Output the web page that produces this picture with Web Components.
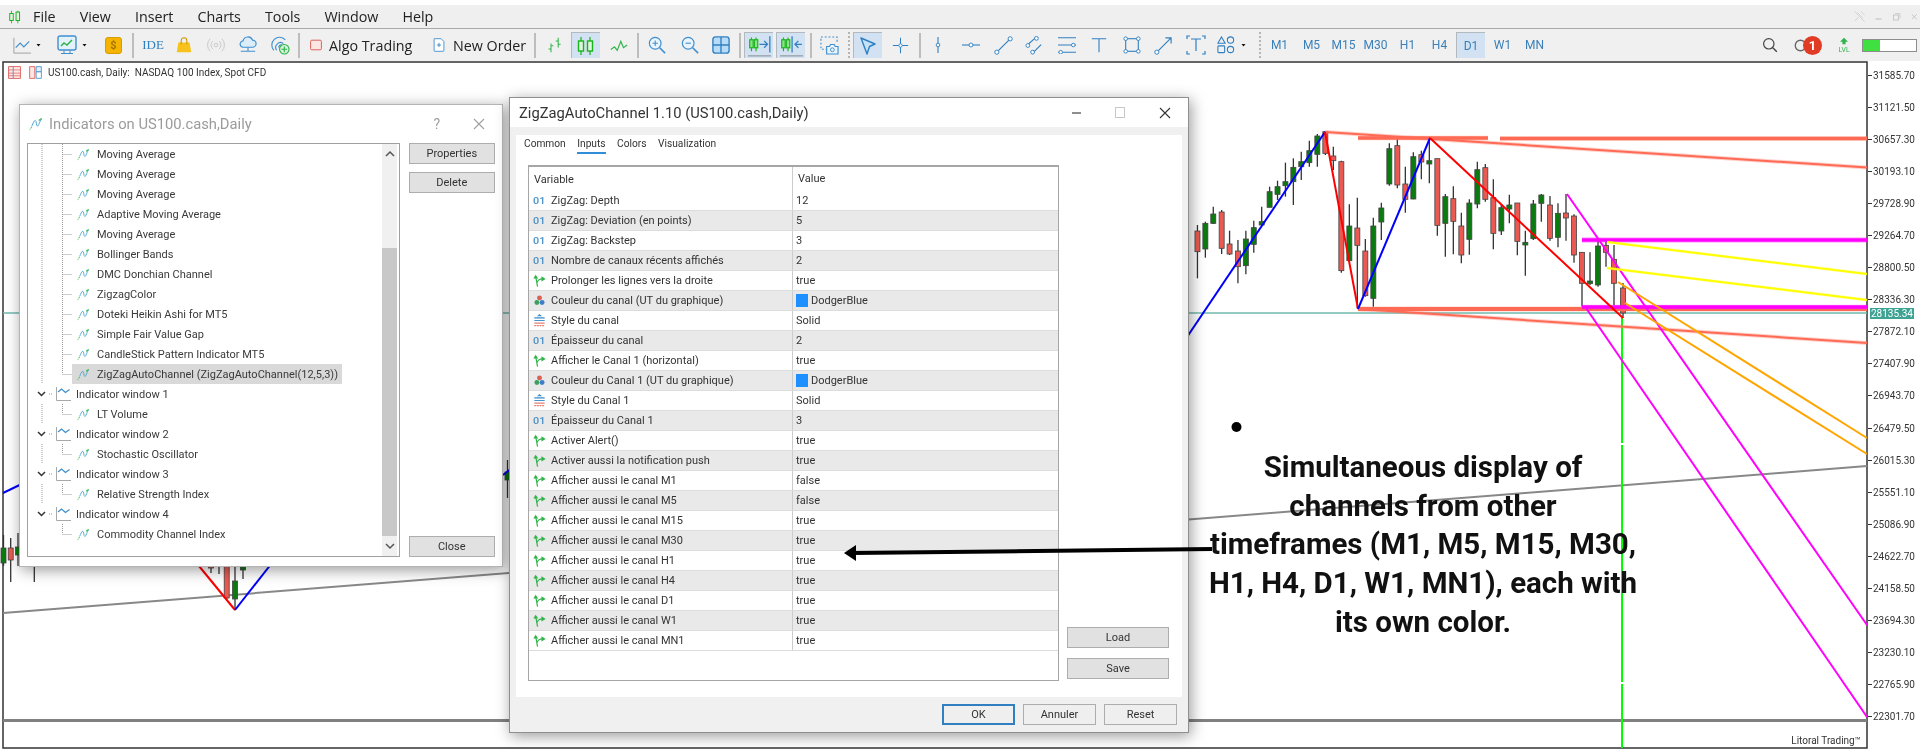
<!DOCTYPE html>
<html>
<head>
<meta charset="utf-8">
<title>ZigZagAutoChannel</title>
<style>
  html, body { margin: 0; background: #fff; font-family: Roboto, "Liberation Sans", sans-serif; }
</style>
</head>
<body>
<mt-app>
  <mt-menubar>
    <mt-menu-item>File</mt-menu-item>
    <mt-menu-item>View</mt-menu-item>
    <mt-menu-item>Insert</mt-menu-item>
    <mt-menu-item>Charts</mt-menu-item>
    <mt-menu-item>Tools</mt-menu-item>
    <mt-menu-item>Window</mt-menu-item>
    <mt-menu-item>Help</mt-menu-item>
  </mt-menubar>
  <mt-toolbar></mt-toolbar>
  <mt-chart></mt-chart>

  <mt-dialog heading="Indicators on US100.cash,Daily" inactive controls="help" style="left:19px;top:104px;width:484px;height:463px">
    <mt-indicators></mt-indicators>
  </mt-dialog>

  <mt-dialog heading="ZigZagAutoChannel 1.10 (US100.cash,Daily)" controls="full" style="left:509px;top:97px;width:680px;height:636px">
    <mt-inputs>
      <mt-input-row icon="num" value="12">ZigZag: Depth</mt-input-row>
      <mt-input-row icon="num" value="5">ZigZag: Deviation (en points)</mt-input-row>
      <mt-input-row icon="num" value="3">ZigZag: Backstep</mt-input-row>
      <mt-input-row icon="num" value="2">Nombre de canaux récents affichés</mt-input-row>
      <mt-input-row icon="bool" value="true">Prolonger les lignes vers la droite</mt-input-row>
      <mt-input-row icon="color" value="DodgerBlue" swatch>Couleur du canal (UT du graphique)</mt-input-row>
      <mt-input-row icon="style" value="Solid">Style du canal</mt-input-row>
      <mt-input-row icon="num" value="2">Épaisseur du canal</mt-input-row>
      <mt-input-row icon="bool" value="true">Afficher le Canal 1 (horizontal)</mt-input-row>
      <mt-input-row icon="color" value="DodgerBlue" swatch>Couleur du Canal 1 (UT du graphique)</mt-input-row>
      <mt-input-row icon="style" value="Solid">Style du Canal 1</mt-input-row>
      <mt-input-row icon="num" value="3">Épaisseur du Canal 1</mt-input-row>
      <mt-input-row icon="bool" value="true">Activer Alert()</mt-input-row>
      <mt-input-row icon="bool" value="true">Activer aussi la notification push</mt-input-row>
      <mt-input-row icon="bool" value="false">Afficher aussi le canal M1</mt-input-row>
      <mt-input-row icon="bool" value="false">Afficher aussi le canal M5</mt-input-row>
      <mt-input-row icon="bool" value="true">Afficher aussi le canal M15</mt-input-row>
      <mt-input-row icon="bool" value="true">Afficher aussi le canal M30</mt-input-row>
      <mt-input-row icon="bool" value="true">Afficher aussi le canal H1</mt-input-row>
      <mt-input-row icon="bool" value="true">Afficher aussi le canal H4</mt-input-row>
      <mt-input-row icon="bool" value="true">Afficher aussi le canal D1</mt-input-row>
      <mt-input-row icon="bool" value="true">Afficher aussi le canal W1</mt-input-row>
      <mt-input-row icon="bool" value="true">Afficher aussi le canal MN1</mt-input-row>
    </mt-inputs>
  </mt-dialog>

  <mt-note>
    <div>Simultaneous display of</div>
    <div>channels from other</div>
    <div>timeframes (M1, M5, M15, M30,</div>
    <div>H1, H4, D1, W1, MN1), each with</div>
    <div>its own color.</div>
  </mt-note>
</mt-app>

<script>
const BLUE = "#3f8fcf";
const GREEN = "#2fb34a";

// toolbar and row icons, all on a 20x20 box unless a width is passed
const ICONS = {
  logo: `<path d="M5 1v18M14 1v18" stroke="#18b418" stroke-width="1.2"/><rect x="2.5" y="5" width="5" height="10" fill="#e6f7e6" stroke="#18b418" stroke-width="1.4"/><rect x="11.5" y="3" width="5" height="12" fill="#e6f7e6" stroke="#18b418" stroke-width="1.4"/>`,
  linechart: `<path d="M1 2V19H20" stroke="#9a9a9a"/><path d="M3 13l5-5 4 4 6-6" stroke="${BLUE}" stroke-width="1.3"/>`,
  drop: `<path d="M1 8h8l-4 5z" fill="#111"/>`,
  monitor: `<rect x="1" y="1" width="18" height="14" rx="2" fill="#e3f1fb" stroke="${BLUE}" stroke-width="1.4"/><path d="M4 18.5h12M7 15.5v3m6-3v3" stroke="${BLUE}"/><path d="M4 11l3-3 3 2 5-5" stroke="${GREEN}" stroke-width="1.5"/>`,
  bag: `<path d="M3 7h14l2 12H1z" fill="#f7c21c"/><path d="M6.5 9V4.5a3.5 3.5 0 017 0V9" stroke="#c99700" stroke-width="1.3"/>`,
  signal: `<circle cx="10" cy="10" r="2" stroke="#c4c4c4"/><path d="M6.5 5.5a6 6 0 000 9M13.5 5.5a6 6 0 010 9M3.5 3a10 10 0 000 14M16.5 3a10 10 0 010 14" stroke="#c4c4c4"/>`,
  cloud: `<path d="M5 12.5a3.5 3.5 0 01-.5-7 5.5 5.5 0 0110.5-1A4 4 0 0115 12.5z" fill="#dcedfa" stroke="${BLUE}" stroke-width="1.3"/><path d="M10 12.5v4M2 17h16" stroke="${BLUE}" stroke-width="1.2"/>`,
  vps: `<path d="M3 15a8 8 0 0112-11M6 15a5 5 0 017-7M9 13a2 2 0 013-3" stroke="${BLUE}" stroke-width="1.2"/><circle cx="14" cy="14" r="5" fill="#d8f3dc" stroke="${GREEN}" stroke-width="1.2"/><path d="M11 14h6M14 11v6" stroke="${GREEN}" stroke-width="1.2"/>`,
  algo: `<rect x="1" y="2" width="18" height="16" rx="2" fill="#fbe6e3" stroke="#d9534f" stroke-width="1.5"/>`,
  doc: `<path d="M3 1h10l4 4v13a1 1 0 01-1 1H4a1 1 0 01-1-1V2z" fill="#fff" stroke="${BLUE}" stroke-width="1.3"/><path d="M7 10h6M10 7v6" stroke="#2f7fc1" stroke-width="1.2"/>`,
  bars: `<path d="M5 8v11M2 15h3M5 11h3M14 1v12M11 5h3M14 9h3" stroke="${GREEN}" stroke-width="1.3"/>`,
  candle: `<path d="M5 1v18M14 1v18" stroke="#18b418" stroke-width="1.2"/><rect x="2.5" y="5" width="5" height="10" fill="#dff5df" stroke="#18b418" stroke-width="1.4"/><rect x="11.5" y="5" width="5" height="10" fill="#dff5df" stroke="#18b418" stroke-width="1.4"/>`,
  line: `<path d="M1 15l4-3 3 4 4-10 3 7 4-3" stroke="${GREEN}" stroke-width="1.3"/>`,
  zin: `<circle cx="8" cy="8" r="6.5" fill="#eaf4fc" stroke="${BLUE}" stroke-width="1.3"/><path d="M13 13l6 6" stroke="${BLUE}" stroke-width="1.8"/><path d="M5 8h6M8 5v6" stroke="${BLUE}" stroke-width="1.2"/>`,
  zout: `<circle cx="8" cy="8" r="6.5" fill="#eaf4fc" stroke="${BLUE}" stroke-width="1.3"/><path d="M13 13l6 6" stroke="${BLUE}" stroke-width="1.8"/><path d="M5 8h6" stroke="${BLUE}" stroke-width="1.2"/>`,
  grid: `<rect x="1" y="1" width="18" height="18" rx="3" fill="#b8dcf8" stroke="#2f7fc1" stroke-width="1.5"/><path d="M10 1v18M1 10h18" stroke="#2f7fc1" stroke-width="1.5"/>`,
  scrollr: `<path d="M3 3v12M7 3v12" stroke="#18b418"/><rect x="1.5" y="5" width="3" height="7" fill="#8ee08e" stroke="#18b418"/><rect x="5.5" y="5" width="3" height="7" fill="#8ee08e" stroke="#18b418"/><path d="M10 9h7M14 6l3 3-3 3M19 2v14" stroke="#2f7fc1" stroke-width="1.1"/><path d="M0 19h20" stroke="#9aa3ab" stroke-width="1.2"/>`,
  scrolll: `<path d="M3 3v12M7 3v12" stroke="#18b418"/><rect x="1.5" y="5" width="3" height="7" fill="#8ee08e" stroke="#18b418"/><rect x="5.5" y="5" width="3" height="7" fill="#8ee08e" stroke="#18b418"/><path d="M10.5 2v14M19 9h-6M16 6l-3 3 3 3" stroke="#2f7fc1" stroke-width="1.1"/><path d="M0 19h20" stroke="#9aa3ab" stroke-width="1.2"/>`,
  camera: `<path d="M8 14H1V1h17v6" stroke="${BLUE}" stroke-dasharray="2 2" stroke-width="1.2"/><path d="M7 11h3l1-2h4l1 2h3v8H7z" fill="#eaf4fc" stroke="${BLUE}" stroke-width="1.2"/><circle cx="13" cy="14.5" r="2" stroke="${BLUE}"/>`,
  cursor: `<path d="M3 2l14 6-5.5 2.5L9 18z" fill="#c5e2f8" stroke="#2f7fc1" stroke-width="1.4" stroke-linejoin="round"/>`,
  cross: `<path d="M10 1v18M1 10h18" stroke="#2f7fc1" stroke-width="1.2"/><circle cx="10" cy="10" r="2" fill="#fff" stroke="#2f7fc1"/>`,
  vline: `<path d="M10 1v18" stroke="#2f7fc1" stroke-width="1.2"/><circle cx="10" cy="10" r="2" fill="#fff" stroke="#2f7fc1"/>`,
  hline: `<path d="M0 10h20" stroke="#2f7fc1" stroke-width="1.2"/><circle cx="10" cy="10" r="2.2" fill="#fff" stroke="#2f7fc1"/>`,
  trend: `<path d="M3 17L17 3" stroke="#2f7fc1" stroke-width="1.2"/><circle cx="3" cy="17" r="2.2" fill="#fff" stroke="#2f7fc1"/><circle cx="17" cy="3" r="2.2" fill="#fff" stroke="#2f7fc1"/>`,
  channel: `<path d="M3 9L11 2M8 18L17 9" stroke="#2f7fc1" stroke-width="1.2"/><circle cx="3" cy="10" r="2" fill="#fff" stroke="#2f7fc1"/><circle cx="12" cy="2.5" r="2" fill="#fff" stroke="#2f7fc1"/><circle cx="8" cy="17" r="2" fill="#fff" stroke="#2f7fc1"/>`,
  fib: `<path d="M0 2h20M0 10h20M0 18h20" stroke="#2f7fc1" stroke-width="1.2"/><circle cx="17" cy="10" r="2" fill="#fff" stroke="#2f7fc1"/><circle cx="3" cy="18" r="2" fill="#fff" stroke="#2f7fc1"/>`,
  ttool: `<path d="M2 3h16M10 3v15" stroke="#2f7fc1" stroke-width="1.2"/>`,
  rect: `<rect x="3" y="3" width="14" height="14" stroke="#2f7fc1" stroke-width="1.2"/><circle cx="3" cy="3" r="2" fill="#fff" stroke="#2f7fc1"/><circle cx="17" cy="3" r="2" fill="#fff" stroke="#2f7fc1"/><circle cx="3" cy="17" r="2" fill="#fff" stroke="#2f7fc1"/><circle cx="17" cy="17" r="2" fill="#fff" stroke="#2f7fc1"/>`,
  arrow: `<path d="M3 17L18 2M12 2h6v6" stroke="#2f7fc1" stroke-width="1.2"/><circle cx="3" cy="17" r="2.2" fill="#fff" stroke="#2f7fc1"/>`,
  textbox: `<path d="M1 4V1h3M16 1h3v3M1 16v3h3M16 19h3v-3M5 4h10M10 4v12" stroke="#2f7fc1" stroke-width="1.2"/>`,
  shapes: `<path d="M5 1l4 7H1z" stroke="#2f7fc1" stroke-width="1.2"/><circle cx="15" cy="4.5" r="3.5" stroke="#2f7fc1" stroke-width="1.2"/><rect x="1" y="11" width="7.5" height="7.5" rx="1" stroke="#2f7fc1" stroke-width="1.2"/><circle cx="15" cy="15" r="3.5" stroke="#2f7fc1" stroke-width="1.2"/>`,
  search: `<circle cx="8.5" cy="8.5" r="6.5" stroke="#444" stroke-width="1.5"/><path d="M13.5 13.5l5 5" stroke="#444" stroke-width="1.8"/>`,
  bell: `<circle cx="10" cy="10" r="7" stroke="#666" stroke-width="1.8"/>`,
  lvl: `<path d="M10 1l5 5h-3v3H8V6H5z" fill="${GREEN}"/><text x="10" y="19" font-size="9" text-anchor="middle" fill="${GREEN}" font-family="Roboto" textLength="14" lengthAdjust="spacingAndGlyphs">LVL</text>`,
  pin: `<path d="M6 3l9 9M8 11l-5 6M12 2l6 6M2 2l16 16" stroke="#c9c9c9" stroke-width="1.1"/>`,
  minus: `<path d="M3 14h12" stroke="#bdbdbd" stroke-width="2"/>`,
  restore: `<rect x="3" y="6" width="10" height="10" stroke="#bdbdbd" stroke-width="1.6"/><path d="M6 3h10v10" stroke="#bdbdbd" stroke-width="1.2"/>`,
  close: `<path d="M4 5l11 11M15 5L4 16" stroke="#bdbdbd" stroke-width="1.8"/>`,
  book: `<rect x="1" y="1" width="18" height="18" fill="#fde8e6" stroke="#d9534f" stroke-width="1.3"/><path d="M1 6h18M1 11h18M1 15h18" stroke="#d9534f"/><path d="M8 1v18" stroke="#3f6fc0"/>`,
  tplt: `<path d="M1 1h8v18H1z" fill="#fde8e6" stroke="#d9534f" stroke-width="1.3"/><path d="M11 1h8v8h-8z" fill="#e3f1fb" stroke="#3f8fcf" stroke-width="1.3"/><path d="M11 9h8v10h-8z" fill="#fff" stroke="#3f8fcf" stroke-width="1.3"/>`,
  ind: `<path d="M1 18c2-1 2-3 3-5" stroke="${GREEN}" stroke-width="1.4" stroke-dasharray="2 1"/><path d="M4 13c2-4 3-8 5-8 2 0 1 8 3 8 2 0 3-7 6-10" stroke="#3f9fd0" stroke-width="1.3"/><path d="M14 5l4-3" stroke="${GREEN}" stroke-width="1.6"/>`,
  num: `<text x="0" y="15" font-size="14" fill="#4a90c8" font-family="Roboto" font-weight="500" textLength="19" lengthAdjust="spacingAndGlyphs">01</text>`,
  bool: `<path d="M7 19.5L4 3" stroke="${GREEN}" stroke-width="1.8"/><path d="M4 1L8 7H0.5z" fill="${GREEN}"/><path d="M6 13C8 9 10 7.5 14 7.5" stroke="${GREEN}" stroke-width="1.6"/><path d="M13 3.5L19.5 7.5L13 11.5z" fill="${GREEN}"/>`,
  color: `<circle cx="10" cy="6" r="3.8" fill="#d9634f"/><circle cx="6" cy="13" r="3.8" fill="#3f9f5f"/><circle cx="14" cy="13" r="3.8" fill="#3f7fc9"/>`,
  style: `<path d="M2 6h16" stroke="#3f8fcf" stroke-width="2"/><path d="M2 10h16" stroke="#3f8fcf" stroke-width="1.5"/><path d="M2 14h16" stroke="#e0584f" stroke-width="1.5"/><path d="M2 18h16" stroke="#e0584f" stroke-width="1.5" stroke-dasharray="3 1"/><path d="M10 0l4 3.5H6z" fill="#3f8fcf"/>`
};

function svgIcon(name, w = 20, h = w) {
  return `<svg width="${w}" height="${h}" viewBox="0 0 20 20" fill="none" style="display:block;flex:none">${ICONS[name]}</svg>`;
}

class MtApp extends HTMLElement {
  constructor() {
    super();
    this.attachShadow({ mode: "open" });
    this.shadowRoot.innerHTML = `
      <style>
        :host { display: flex; flex-direction: column; position: relative; width: 1920px; height: 749px; overflow: hidden; padding-top: 5px; box-sizing: border-box; color: #222; filter: blur(.35px); }
      </style>
      <slot></slot>`;
  }
}

class MtMenubar extends HTMLElement {
  constructor() {
    super();
    this.attachShadow({ mode: "open" });
    this.shadowRoot.innerHTML = `
      <style>
        :host { display: flex; align-items: center; height: 23px; flex: none; background: #efefef; padding-left: 8px; }
        .end { margin-left: auto; display: flex; align-items: center; gap: 8px; padding-right: 1px; }
      </style>
      ${svgIcon("logo", 14, 18)}
      <slot></slot>
      <div class="end">${svgIcon("pin", 13)}${svgIcon("minus", 10)}${svgIcon("restore", 10)}${svgIcon("close", 9)}</div>`;
  }
}

class MtMenuItem extends HTMLElement {
  constructor() {
    super();
    this.attachShadow({ mode: "open" });
    this.shadowRoot.innerHTML = `
      <style>
        :host { display: block; font: 14.3px "Open Sans", Roboto, sans-serif; color: #222; margin-left: 24px; }
        :host(:first-child) { margin-left: 11px; }
      </style>
      <slot></slot>`;
  }
}

class MtTool extends HTMLElement {
  constructor() {
    super();
    this.attachShadow({ mode: "open" });
  }
  connectedCallback() {
    const name = this.getAttribute("icon");
    const w = this.getAttribute("w") || 18;
    const h = this.getAttribute("h") || w;
    this.shadowRoot.innerHTML = `
      <style>
        :host { display: flex; align-items: center; justify-content: center; flex: none; height: 26px; box-sizing: border-box; white-space: nowrap; }
        :host([active]) { background: #d2e2f2; border-top: 1px solid #b3b9bf; border-left: 1px solid #b3b9bf; }
        :host([tf]) { width: 29px; font: 12px Roboto, sans-serif; color: #3a7fb8; }
        :host([label]) { gap: 7px; font: 14.3px "Open Sans", Roboto, sans-serif; color: #222; }
        :host([coin]) { height: 17px; background: #f5b400; border: 1px solid #d99c00; border-radius: 3px; font: 700 11px Roboto, sans-serif; color: #a87400; }
        :host([ide]) { font: 13px "Liberation Serif", serif; color: #2f7fc1; }
      </style>
      ${name ? svgIcon(name, w, h) : ""}<slot></slot>`;
  }
}

class MtToolbar extends HTMLElement {
  constructor() {
    super();
    this.attachShadow({ mode: "open" });
    const items = [
      [13, "linechart", 18], [36, "drop", 10], [57, "monitor", 20], [82, "drop", 10], ["coin", 105, "$", 17], ["sep", 132],
      ["ide", 143, "IDE", 20], [176, "bag", 16], [207, "signal", 18], [239, "cloud", 18], [271, "vps", 19], ["sep", 298],
      [310, "algo", 12, "Algo Trading"], [432, "doc", 14, "New Order"], ["sep", 534],
      [547, "bars", 16], [571, "candle", 20, null, 29], [610, "line", 18], ["sep", 637],
      [648, "zin", 18], [681, "zout", 18], [712, "grid", 18], ["sep", 739],
      [744, "scrollr", 23, null, 29], [776, "scrolll", 23, null, 29], ["sep", 810],
      [820, "camera", 19], ["dots", 848], [853, "cursor", 20, null, 29], [892, "cross", 17], ["sep", 919],
      [929, "vline", 18], [962, "hline", 18], [994, "trend", 19], [1025, "channel", 19], [1058, "fib", 18], [1090, "ttool", 18],
      [1123, "rect", 18], [1154, "arrow", 19], [1186, "textbox", 20], [1217, "shapes", 18], [1241, "drop", 10], ["dots", 1259]
    ];
    // the timeframes sit on a 32px pitch
    ["M1", "M5", "M15", "M30", "H1", "H4", "D1", "W1", "MN"].forEach((t, i) => {
      items.push([1265 + i * 32 + (i > 5 ? -1 : 0), "tf", t]);
    });
    let x = 0;
    let html = "";
    for (const it of items) {
      if (it[0] === "sep" || it[0] === "dots") {
        html += `<i class="${it[0]}" style="margin-left:${it[1] - x}px"></i>`;
        x = it[1] + 2;
      } else if (it[0] === "coin" || it[0] === "ide") {
        html += `<mt-tool ${it[0]} style="margin-left:${it[1] - x}px;width:${it[3]}px">${it[2]}</mt-tool>`;
        x = it[1] + it[3];
      } else if (it[1] === "tf") {
        const active = it[2] === "D1" ? "active" : "";
        html += `<mt-tool tf ${active} style="margin-left:${it[0] - x}px">${it[2]}</mt-tool>`;
        x = it[0] + 29;
      } else if (it[3]) {
        const width = it[3] === "Algo Trading" ? 106 : 98;
        html += `<mt-tool label icon="${it[1]}" w="${it[2]}" style="margin-left:${it[0] - x}px;width:${width}px;justify-content:flex-start">${it[3]}</mt-tool>`;
        x = it[0] + width;
      } else if (it[4]) {
        html += `<mt-tool active icon="${it[1]}" w="${it[2]}" style="margin-left:${it[0] - x}px;width:${it[4]}px"></mt-tool>`;
        x = it[0] + it[4];
      } else {
        html += `<mt-tool icon="${it[1]}" w="${it[2]}" style="margin-left:${it[0] - x}px;width:${it[2]}px"></mt-tool>`;
        x = it[0] + it[2];
      }
    }
    this.shadowRoot.innerHTML = `
      <style>
        :host { display: flex; align-items: center; height: 32px; flex: none; background: #f0f0f0; border-top: 1px solid #a9a9a9; }
        .sep { flex: none; width: 2px; height: 25px; background: #bdbdbd; }
        .dots { flex: none; width: 2px; height: 26px; background: repeating-linear-gradient(#b5b5b5 0 2px, transparent 2px 4px); }
        .end { margin-left: auto; display: flex; align-items: center; }
        .badge { width: 19px; height: 19px; border-radius: 50%; background: #e03b24; color: #fff; font: 700 13px Roboto, sans-serif; display: flex; align-items: center; justify-content: center; margin-left: -5px; }
        .meter { width: 53px; height: 11px; border: 1px solid #8d8d8d; background: linear-gradient(to right, #3fe03f 0 17px, #fff 17px); margin: 0 3px 0 10px; }
      </style>
      ${html}
      <div class="end">
        ${svgIcon("search", 16)}
        <div style="width:15px"></div>
        ${svgIcon("bell", 15)}
        <div class="badge">1</div>
        <div style="width:14px"></div>
        ${svgIcon("lvl", 16, 20)}
        <div class="meter"></div>
      </div>`;
  }
}

// [x, wickTop, bodyTop, bodyBottom, wickBottom, colour], page pixels
const fromZ10 = (a) => a.map(([z, t, b1, b2, e, c]) => [1300 + z / 3, 120 + t / 3, 120 + b1 / 3, 120 + b2 / 3, 120 + e / 3, c]);
const fromZ8 = (a) => a.map(([z, t, b1, b2, e, c]) => [1190 + z / 2.148, 90 + t / 3, 90 + b1 / 3, 90 + b2 / 3, 90 + e / 3, c]);
const CANDLES = [
  [3.5, 535, 548, 563, 566, "g"], [10.7, 538, 548, 560, 582, "r"], [18, 533, 547, 555, 566, "g"], [34.3, 545, 550, 552, 582, "g"],
  [211, 555, 558, 568, 573, "r"], [219, 555, 558, 562, 574, "g"], [226.7, 540, 560, 598, 600, "r"], [235, 540, 581, 599, 610, "g"], [243, 555, 560, 570, 579, "g"],
  [507.5, 460, 472, 480, 498, "g"],
  ...fromZ8([
    [16, 405, 423, 485, 565, "r"], [33, 395, 400, 477, 503, "g"], [50, 350, 372, 400, 402, "g"], [68, 360, 366, 475, 492, "r"],
    [85, 422, 462, 492, 495, "r"], [103, 450, 483, 530, 580, "r"], [120, 422, 447, 527, 553, "g"], [137, 392, 413, 463, 488, "g"],
    [154, 350, 395, 405, 405, "g"], [171, 290, 305, 352, 350, "g"], [188, 272, 290, 313, 330, "g"], [205, 218, 275, 287, 320, "g"],
    [222, 205, 232, 275, 345, "g"], [239, 185, 215, 230, 270, "g"]
  ]),
  ...fromZ10([
    [28, 62, 92, 128, 140, "g"], [52, 42, 48, 103, 140, "g"], [76, 35, 35, 100, 105, "r"], [100, 80, 108, 122, 150, "r"],
    [124, 122, 125, 452, 458, "r"], [148, 253, 318, 422, 425, "g"], [172, 233, 324, 376, 565, "r"], [196, 357, 393, 527, 530, "r"],
    [220, 293, 318, 535, 560, "g"], [244, 248, 264, 306, 360, "g"], [268, 70, 86, 192, 197, "g"], [292, 55, 77, 195, 205, "r"],
    [316, 140, 192, 238, 278, "r"], [340, 97, 110, 237, 238, "g"], [364, 92, 104, 126, 178, "r"], [388, 60, 122, 132, 190, "g"],
    [412, 116, 116, 316, 347, "r"], [436, 222, 230, 310, 410, "g"], [460, 199, 236, 304, 403, "r"], [484, 278, 318, 405, 430, "r"],
    [508, 238, 249, 358, 404, "g"], [532, 125, 149, 252, 265, "g"], [556, 132, 143, 238, 245, "r"], [580, 178, 233, 340, 388, "r"],
    [604, 252, 263, 333, 345, "g"], [628, 224, 255, 267, 310, "g"], [652, 249, 249, 364, 406, "r"], [676, 332, 367, 375, 467, "g"],
    [700, 240, 252, 356, 360, "g"], [724, 222, 225, 250, 305, "g"], [750, 228, 255, 355, 362, "r"], [774, 250, 280, 352, 382, "g"],
    [798, 222, 279, 294, 362, "r"], [822, 283, 288, 405, 428, "r"], [846, 397, 397, 490, 560, "r"], [870, 397, 483, 491, 495, "g"],
    [894, 358, 378, 495, 500, "g"], [918, 360, 376, 397, 440, "r"], [942, 375, 418, 490, 555, "r"]
  ]),
  [1623, 283, 288, 313, 318, "r"]
];

const PRICES = ["31585.70", "31121.50", "30657.30", "30193.10", "29728.90", "29264.70", "28800.50", "28336.30", "27872.10", "27407.90", "26943.70", "26479.50", "26015.30", "25551.10", "25086.90", "24622.70", "24158.50", "23694.30", "23230.10", "22765.90", "22301.70"];

class MtChart extends HTMLElement {
  constructor() {
    super();
    this.attachShadow({ mode: "open" });
    const line = (x1, y1, x2, y2, color, w = 2, halo = 0) =>
      (halo ? `<line x1="${x1}" y1="${y1}" x2="${x2}" y2="${y2}" stroke="${color}" stroke-width="${w + halo}" opacity=".3"/>` : "") +
      `<line x1="${x1}" y1="${y1}" x2="${x2}" y2="${y2}" stroke="${color}" stroke-width="${w}"/>`;
    const candles = CANDLES.map(([x, t, a, b, e, c]) =>
      `<line x1="${x}" y1="${t}" x2="${x}" y2="${e}" stroke="#333" stroke-width="1.3"/>` +
      `<rect x="${x - 2.5}" y="${a}" width="5" height="${Math.max(b - a, 2)}" fill="${c === "r" ? "#ea5a52" : "#0b7a10"}" stroke="#444" stroke-width=".8"/>`
    ).join("");
    const R = "#ff6a55";
    const svg = `
      <svg width="1868" height="688" viewBox="0 61 1868 688">
        <rect x="3" y="62" width="1864" height="686" fill="#fff" stroke="#333" stroke-width="1.5"/>
        ${line(3, 313, 1867, 313, "#6fb8ae", 1.5)}
        ${line(3, 613, 1867, 466, "#888", 2)}
        ${line(3, 720.5, 1867, 720.5, "#808080", 3)}
        ${candles}
        ${line(1622, 318, 1622, 443, "#00ff00", 2)}${line(1622, 445, 1622, 682, "#00ff00", 2)}${line(1622, 684, 1622, 748, "#00ff00", 2)}
        ${line(1325, 132, 1867, 167.5, R, 2, 2)}
        ${line(1358, 138, 1488, 138, R, 3.5, 1)}${line(1500, 138.5, 1867, 138.5, R, 3.5, 1)}
        ${line(1358, 309, 1867, 309, R, 4, 1)}
        ${line(1358, 309, 1867, 343, R, 2, 2)}
        ${line(1582, 240, 1867, 240, "#ff00ff", 3.5, 2)}
        ${line(1582, 307, 1867, 307, "#ff00ff", 3.5, 1)}
        ${line(1567, 194, 1867, 625, "#ff00ff", 2)}
        ${line(1586, 308, 1867, 717, "#ff00ff", 2)}
        ${line(1607, 242, 1867, 274, "#ffff00", 2, 1)}
        ${line(1607, 268, 1867, 300, "#ffff00", 2, 1)}
        ${line(1618, 282, 1867, 438, "#ffa500", 2)}
        ${line(1625, 303, 1867, 454, "#ffa500", 2)}
        ${line(1150, 392, 1325, 132, "#0000ff", 2)}
        ${line(1325, 132, 1358, 309, "#ff0000", 2)}
        ${line(1358, 309, 1430, 138, "#0000ff", 2)}
        ${line(1430, 138, 1623, 318, "#ff0000", 2)}
        ${line(3, 493, 30, 480, "#0000ff", 2)}
        ${line(190, 555, 235, 610, "#ff0000", 2)}
        ${line(235, 610, 290, 540, "#0000ff", 2)}
        ${line(503, 475, 512, 468, "#0000ff", 2)}
      </svg>`;
    this.shadowRoot.innerHTML = `
      <style>
        :host { display: flex; flex: 1; min-height: 0; position: relative; background: #fff; }
        svg { display: block; flex: none; }
        .axis { flex: 1; margin-top: -2px; font: 10px Roboto, sans-serif; color: #333; }
        .axis div { display: flex; align-items: center; height: 32.1px; gap: 1px; }
        .axis div::before { content: ""; width: 4px; height: 1px; background: #333; }
        .head { position: absolute; left: 8px; top: 5px; display: flex; align-items: center; gap: 7px; font: 10px Roboto, sans-serif; color: #333; white-space: nowrap; }
        .head span { margin-left: -2px; }
        .tag { position: absolute; left: 1870px; top: 247px; width: 44px; height: 11px; background: #3fa394; color: #fff; font: 10px/11px Roboto, sans-serif; text-align: center; }
        .brand { position: absolute; right: 59px; bottom: 3px; font: 10px Roboto, sans-serif; color: #333; }
      </style>
      ${svg}
      <div class="axis">${PRICES.map((p) => `<div>${p}</div>`).join("")}</div>
      <div class="head">${svgIcon("book", 13)}${svgIcon("tplt", 15, 13)}<span>US100.cash, Daily:&nbsp; NASDAQ 100 Index, Spot CFD</span></div>
      <div class="tag">28135.34</div>
      <div class="brand">Litoral Trading™</div>`;
  }
}

class MtDialog extends HTMLElement {
  constructor() {
    super();
    this.attachShadow({ mode: "open" });
  }
  connectedCallback() {
    const help = this.getAttribute("controls") === "help";
    const controls = help
      ? `<span class="ctl q">?</span><svg class="ctl x" width="12" height="12" viewBox="0 0 12 12"><path d="M1 1l10 10M11 1L1 11" stroke="#a0a0a0" stroke-width="1.1"/></svg>`
      : `<svg class="ctl" width="11" height="11" viewBox="0 0 11 11"><path d="M1 6h9" stroke="#444" stroke-width="1.2"/></svg>
         <svg class="ctl" width="11" height="11" viewBox="0 0 11 11"><rect x=".5" y=".5" width="9" height="10" fill="none" stroke="#c8c8c8"/></svg>
         <svg class="ctl" width="12" height="12" viewBox="0 0 12 12"><path d="M1 1l10 10M11 1L1 11" stroke="#333" stroke-width="1.1"/></svg>`;
    this.shadowRoot.innerHTML = `
      <style>
        :host { display: flex; flex-direction: column; position: absolute; box-sizing: border-box; background: #f0f0f0; border: 1px solid #8f8f8f; box-shadow: 2px 3px 14px rgba(0,0,0,.4); }
        :host([inactive]) { background: #fff; border-color: #b4b4b4; }
        .bar { display: flex; align-items: center; flex: none; height: ${help ? 38 : 29}px; background: #fff; padding: 0 17px 0 9px; font: 14.75px Roboto, sans-serif; color: #333; }
        :host([inactive]) .bar { color: #9b9b9b; }
        .bar .ic { margin-right: 6px; }
        .title { flex: 1; white-space: nowrap; }
        .ctl { margin-left: 33px; flex: none; }
        .q { font: 14px Roboto, sans-serif; color: #a0a0a0; }
        .body { flex: 1; min-height: 0; display: flex; }
      </style>
      <div class="bar">
        ${help ? `<span class="ic">${svgIcon("ind", 14)}</span>` : ""}
        <span class="title">${this.getAttribute("heading")}</span>
        ${controls}
      </div>
      <div class="body"><slot></slot></div>`;
  }
}

class MtButton extends HTMLElement {
  constructor() {
    super();
    this.attachShadow({ mode: "open" });
    this.shadowRoot.innerHTML = `
      <style>
        :host { display: flex; align-items: center; justify-content: center; flex: none; box-sizing: border-box; height: 21px; background: #e1e1e1; border: 1px solid #adadad; font: 11px Roboto, sans-serif; color: #333; }
        :host([default]) { border: 2px solid #2f7fc1; }
        :host([plain]) { background: #efefef; }
      </style>
      <slot></slot>`;
  }
}

class MtTreeRow extends HTMLElement {
  constructor() {
    super();
    this.attachShadow({ mode: "open" });
  }
  connectedCallback() {
    const kind = this.getAttribute("kind") || "item";
    const dot = 'stroke="#9a9a9a" stroke-dasharray="1 1"';
    let gutter;
    if (kind === "window") {
      gutter = `<svg width="48" height="20" fill="none" style="flex:none">
        <path d="M10 8l3.5 3.5L17 8" stroke="#333" stroke-width="1.5"/>
        <path d="M21 10h3" ${dot}/>
        <path d="M28.5 3v13.5H43" stroke="#a8a8a8"/><path d="M30 8l3.5-3 4 3.5 4-3" stroke="${BLUE}" stroke-width="1.2"/>
      </svg>`;
    } else {
      const outer = this.hasAttribute("noouter") ? "" : `<path d="M14 0v20" ${dot}/>`;
      const inner = this.hasAttribute("last") ? `<path d="M34.5 0v10" ${dot}/>` : `<path d="M34.5 0v20" ${dot}/>`;
      gutter = `<svg width="44" height="20" fill="none" style="flex:none">${outer}${inner}<path d="M34.5 10.5H44" ${dot}/></svg>`;
    }
    this.shadowRoot.innerHTML = `
      <style>
        :host { display: flex; align-items: center; height: 20px; flex: none; font: 11px Roboto, sans-serif; color: #3a3a3a; white-space: nowrap; }
        .cell { display: flex; align-items: center; gap: 7px; height: 20px; padding: 0 4px 0 5px; }
        :host([selected]) .cell { background: #d9d9d9; }
      </style>
      ${gutter}
      ${kind === "window" ? "<slot></slot>" : `<div class="cell">${svgIcon("ind", 13)}<slot></slot></div>`}`;
  }
}

class MtIndicators extends HTMLElement {
  constructor() {
    super();
    this.attachShadow({ mode: "open" });
    const names = ["Moving Average", "Moving Average", "Moving Average", "Adaptive Moving Average", "Moving Average", "Bollinger Bands", "DMC Donchian Channel", "ZigzagColor", "Doteki Heikin Ashi for MT5", "Simple Fair Value Gap", "CandleStick Pattern Indicator MT5"];
    const groups = [["Indicator window 1", "LT Volume"], ["Indicator window 2", "Stochastic Oscillator"], ["Indicator window 3", "Relative Strength Index"], ["Indicator window 4", "Commodity Channel Index"]];
    const chevron = (d) => `<svg width="12" height="8" viewBox="0 0 12 8"><path d="${d}" fill="none" stroke="#555" stroke-width="1.5"/></svg>`;
    this.shadowRoot.innerHTML = `
      <style>
        :host { display: flex; flex: 1; min-height: 0; gap: 8.5px; padding: 0 7px 9px 7px; background: #fff; }
        .tree { flex: none; width: 373px; display: flex; box-sizing: border-box; border: 1px solid #a0a0a0; background: #fff; }
        .rows { flex: 1; display: flex; flex-direction: column; }
        .scroll { flex: none; width: 15px; margin-right: 2px; display: flex; flex-direction: column; background: #f0f0f0; }
        .scroll .btn { height: 20px; display: flex; align-items: center; justify-content: center; flex: none; }
        .track { flex: 1; padding-top: 84px; display: flex; }
        .thumb { flex: 1; background: #c8c8c8; }
        .side { flex: 1; display: flex; flex-direction: column; gap: 8px; }
        .grow { flex: 1; }
      </style>
      <div class="tree">
        <div class="rows">
          ${names.map((n) => `<mt-tree-row>${n}</mt-tree-row>`).join("")}
          <mt-tree-row selected last>ZigZagAutoChannel (ZigZagAutoChannel(12,5,3))</mt-tree-row>
          ${groups.map(([w, c], i) => `<mt-tree-row kind="window">${w}</mt-tree-row><mt-tree-row last ${i === 3 ? "noouter" : ""}>${c}</mt-tree-row>`).join("")}
        </div>
        <div class="scroll">
          <div class="btn">${chevron("M2 6l4-4 4 4")}</div>
          <div class="track"><div class="thumb"></div></div>
          <div class="btn">${chevron("M2 2l4 4 4-4")}</div>
        </div>
      </div>
      <div class="side">
        <mt-button>Properties</mt-button>
        <mt-button>Delete</mt-button>
        <div class="grow"></div>
        <mt-button>Close</mt-button>
      </div>`;
  }
}

class MtInputs extends HTMLElement {
  constructor() {
    super();
    this.attachShadow({ mode: "open" });
    this.shadowRoot.innerHTML = `
      <style>
        :host { display: flex; flex-direction: column; flex: 1; min-height: 0; min-width: 0; padding: 8px 6px 0 6px; font: 11px Roboto, sans-serif; color: #333; }
        .panel { flex: none; height: 562px; background: #fff; display: flex; flex-direction: column; }
        .tabs { display: flex; gap: 11.5px; height: 30px; flex: none; padding-left: 8px; box-sizing: border-box; font-size: 10.2px; }
        .tabs span { height: 19px; line-height: 17px; box-sizing: border-box; }
        .tabs .on { border-bottom: 2px solid #2f8fd8; }
        .content { display: flex; flex: 1; min-height: 0; padding: 0 13px 16px 12px; gap: 8px; }
        .table { flex: none; width: 531px; box-sizing: border-box; border: 1px solid #a6a6a6; border-top-width: 2px; background: #fff; }
        .head { display: grid; grid-template-columns: 263px 1fr; height: 24px; align-items: center; }
        .head span { padding-left: 5px; }
        .head span + span { border-left: 1px solid #ccc; height: 24px; line-height: 24px; }
        .side { flex: 1; display: flex; flex-direction: column; justify-content: flex-end; gap: 10px; padding-bottom: 2px; }
        .foot { flex: 1; display: flex; justify-content: flex-end; align-items: flex-start; gap: 8px; padding: 7px 5px 0 0; }
        .foot mt-button { width: 73px; }
      </style>
      <div class="panel">
        <div class="tabs"><span>Common</span><span class="on">Inputs</span><span>Colors</span><span>Visualization</span></div>
        <div class="content">
          <div class="table">
            <div class="head"><span>Variable</span><span>Value</span></div>
            <slot></slot>
          </div>
          <div class="side">
            <mt-button>Load</mt-button>
            <mt-button>Save</mt-button>
          </div>
        </div>
      </div>
      <div class="foot">
        <mt-button default plain>OK</mt-button>
        <mt-button plain>Annuler</mt-button>
        <mt-button plain>Reset</mt-button>
      </div>`;
  }
}

class MtInputRow extends HTMLElement {
  constructor() {
    super();
    this.attachShadow({ mode: "open" });
  }
  connectedCallback() {
    const swatch = this.hasAttribute("swatch") ? `<i></i>` : "";
    this.shadowRoot.innerHTML = `
      <style>
        :host { display: grid; grid-template-columns: 263px 1fr; height: 20px; box-sizing: border-box; border-bottom: 1px solid #dcdcdc; white-space: nowrap; }
        :host(:nth-child(even)) { background: #e9e9e9; }
        .name { display: flex; align-items: center; gap: 5px; padding-left: 4px; }
        .val { display: flex; align-items: center; gap: 3px; padding-left: 3px; border-left: 1px solid #ccc; }
        i { width: 12px; height: 13px; background: #1e90ff; display: block; }
      </style>
      <div class="name">${svgIcon(this.getAttribute("icon"), 13)}<slot></slot></div>
      <div class="val">${swatch}<span>${this.getAttribute("value")}</span></div>`;
  }
}

class MtNote extends HTMLElement {
  constructor() {
    super();
    this.attachShadow({ mode: "open" });
    this.shadowRoot.innerHTML = `
      <style>
        :host { display: block; position: absolute; left: 0; top: 0; }
        .text { position: absolute; left: 1183px; top: 448px; width: 480px; text-align: center; font: 700 29.5px/38.7px Roboto, sans-serif; color: #111; white-space: nowrap; }
        svg { position: absolute; left: 0; top: 0; }
      </style>
      <svg width="1920" height="749" fill="none">
        <path d="M852 553L1212 549" stroke="#000" stroke-width="4"/>
        <path d="M844 553L856 545V561z" fill="#000"/>
        <circle cx="1236.5" cy="427" r="5" fill="#000"/>
      </svg>
      <div class="text"><slot></slot></div>`;
  }
}

customElements.define("mt-app", MtApp);
customElements.define("mt-menubar", MtMenubar);
customElements.define("mt-menu-item", MtMenuItem);
customElements.define("mt-tool", MtTool);
customElements.define("mt-toolbar", MtToolbar);
customElements.define("mt-chart", MtChart);
customElements.define("mt-dialog", MtDialog);
customElements.define("mt-button", MtButton);
customElements.define("mt-tree-row", MtTreeRow);
customElements.define("mt-indicators", MtIndicators);
customElements.define("mt-inputs", MtInputs);
customElements.define("mt-input-row", MtInputRow);
customElements.define("mt-note", MtNote);
</script>
</body>
</html>
